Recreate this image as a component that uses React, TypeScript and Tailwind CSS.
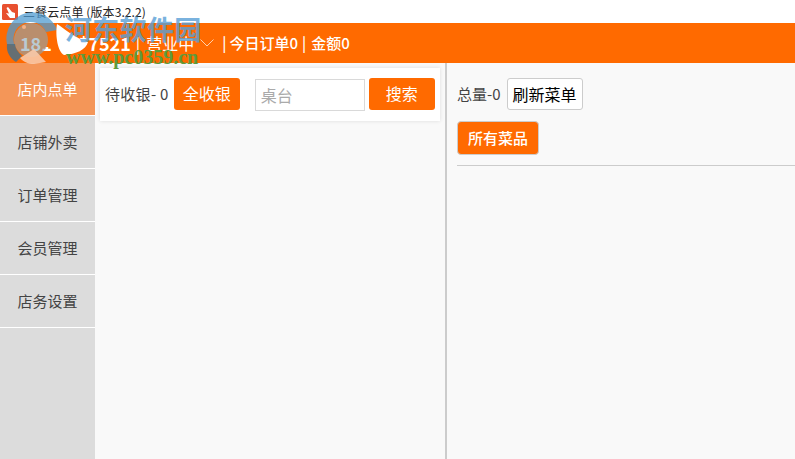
const navItems = ['店内点单', '店铺外卖', '订单管理', '会员管理', '店务设置'];

const cjk = "font-['Microsoft_YaHei','Noto_Sans_CJK_SC',sans-serif]";

function Watermark() {
  return (
    <div className="pointer-events-none absolute left-0 top-0 h-[70px] w-[210px]">
      <svg className="absolute left-0 top-[8px]" width="95" height="60" viewBox="0 0 95 60">
        <rect x="42" y="15" width="18" height="24" fill="#ff6a00" />
        <circle cx="31" cy="32" r="17" fill="#8aa6b6" opacity="0.6" />
        <path d="M7 36 A26 26 0 0 1 57 22 L46 24 A17 17 0 0 0 15 38 Z" fill="#4f9bd0" opacity="0.75" />
        <path d="M7 36 C6 44 10 50 16 54 L22 48 C18 44 15 40 15 36 Z" fill="#55707f" opacity="0.9" />
        <path d="M20 50 L34 41 L46 54 L34 56 C28 56 24 54 20 50 Z" fill="#f8c9a8" opacity="0.9" />
        <circle cx="24" cy="19" r="2" fill="#f6b184" />
        <path d="M57 16 C64 20 74 30 88 34 C86 42 76 46 64 47 C58 44 55 28 57 16 Z" fill="#ffffff" />
      </svg>
      <span className="absolute left-[65px] top-[9px] text-[27px] font-bold leading-[40px] tracking-[0.3px] text-[#5a9fd6] opacity-80">
        河东软件园
      </span>
      <span className="absolute left-[66px] top-[47px] font-['Liberation_Serif',serif] text-[20px] font-bold leading-[20px] text-[#5f9a3c]">
        www.pc0359.cn
      </span>
    </div>
  );
}

export default function App() {
  return (
    <div className={`relative flex h-[459px] w-[795px] flex-col overflow-hidden bg-[#f9f9f9] ${cjk} text-[#444]`}>
      <div className="flex h-[23px] items-center gap-[5px] bg-white pl-[2px] text-[12px] text-[#222]">
        <svg width="16" height="16" viewBox="0 0 16 16">
          <rect width="16" height="16" rx="1.5" fill="#e8502f" />
          <path d="M6 3 L10 8 L13 9 L13 14 L8 14 L4 9 L7 9.5 L4.5 4 Z" fill="#fff" />
        </svg>
        <span className="tracking-[0.1px]">三餐云点单 (版本3.2.2)</span>
      </div>

      <header className="flex h-[40px] items-center bg-[#ff6a00] pl-[20px] text-white">
        <span className="text-[18px] font-bold">181****7521</span>
        <span className="ml-[5px] text-[16px]">|</span>
        <span className="ml-[6px] text-[16px]">营业中</span>
        <svg className="ml-[6px]" width="14" height="8" viewBox="0 0 14 8">
          <path d="M0.5 0.5 L7 7 L13.5 0.5" fill="none" stroke="#ffd0ab" strokeWidth="1" />
        </svg>
        <span className="ml-[8px] text-[15px] font-medium">|</span>
        <span className="ml-[3px] text-[15px] font-medium">今日订单0</span>
        <span className="ml-[4px] text-[15px] font-medium">|</span>
        <span className="ml-[5px] text-[15px] font-medium">金额0</span>
      </header>

      <div className="flex min-h-0 flex-1">
        <nav className="w-[95px] shrink-0 bg-[#dcdcdc]">
          {navItems.map((item, i) => (
            <div
              key={item}
              className={`flex h-[53px] items-center justify-center border-b border-white text-[15px] ${
                i === 0 ? 'bg-[#f49658] text-white' : 'text-[#444]'
              }`}
            >
              {item}
            </div>
          ))}
        </nav>

        <section className="w-[352px] shrink-0 border-r-2 border-[#ccc] p-[5px]">
          <div className="flex h-[53px] w-[340px] items-center bg-white pl-[5px] text-[15px] shadow-[0_0_4px_rgba(0,0,0,0.12)]">
            <span className="whitespace-nowrap tracking-[0.3px]">待收银- 0</span>
            <button className="mb-[2px] ml-[5px] h-[32px] w-[66px] rounded-[3px] bg-[#ff6a00] pb-[1px] text-[16px] text-white">全收银</button>
            <input
              placeholder="桌台"
              className="ml-[15px] h-[32px] w-[110px] border border-[#d9d9d9] bg-white px-[5px] text-[16px] placeholder:text-[#aaa]"
            />
            <button className="mb-[2px] ml-[4px] h-[32px] w-[66px] rounded-[3px] bg-[#ff6a00] pb-[1px] text-[16px] text-white">搜索</button>
          </div>
        </section>

        <section className="min-w-0 flex-1 pl-[10px] pt-[15px]">
          <div className="flex items-center gap-[6px] text-[15px]">
            <span>总量-0</span>
            <button className="h-[32px] w-[76px] rounded-[3px] border border-[#ccc] bg-white text-[16px] text-black">刷新菜单</button>
          </div>
          <button className="mt-[11px] h-[34px] w-[82px] rounded-[4px] border border-[#ccc] bg-[#ff6a00] text-[15px] font-medium text-white">所有菜品</button>
          <div className="mt-[10px] border-t border-[#ccc]" />
        </section>
      </div>

      <Watermark />
    </div>
  );
}
